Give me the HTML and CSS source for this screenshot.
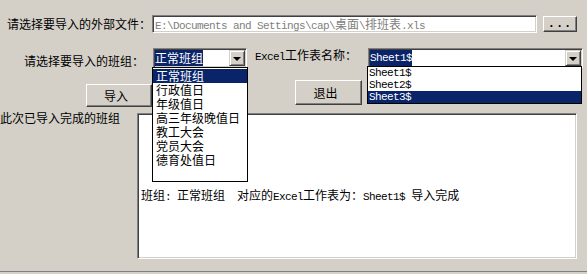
FILE: index.html
```html
<!DOCTYPE html>
<html lang="zh-CN">
<head>
  <meta charset="UTF-8" />
  <meta name="viewport" content="width=device-width, initial-scale=1" />
  <title>导入班组</title>
  <link rel="stylesheet" href="styles.css">
</head>
<body>
  <div class="import-dialog">
    <div class="row file-row">
      <label class="field-label file-label">请选择要导入的外部文件：</label>
      <div class="path-field"><span class="mono">E:\Documents and Settings\cap\</span>桌面<span class="mono">\</span>排班表<span class="mono">.xls</span></div>
      <button class="win-btn browse-btn">...</button>
    </div>

    <div class="row select-row">
      <label class="field-label group-label">请选择要导入的班组：</label>
      <div class="combo group-combo">
        <span class="combo-value">正常班组</span>
        <span class="combo-arrow"></span>
        <ul class="combo-list group-list">
          <li class="selected">正常班组</li>
          <li>行政值日</li>
          <li>年级值日</li>
          <li>高三年级晚值日</li>
          <li>教工大会</li>
          <li>党员大会</li>
          <li>德育处值日</li>
        </ul>
      </div>
      <label class="field-label sheet-label"><span class="mono">Excel</span>工作表名称：</label>
      <div class="combo sheet-combo">
        <span class="combo-value mono">Sheet1$</span>
        <span class="combo-arrow"></span>
        <ul class="combo-list sheet-list mono">
          <li>Sheet1$</li>
          <li>Sheet2$</li>
          <li class="selected">Sheet3$</li>
        </ul>
      </div>
    </div>

    <div class="row button-row">
      <button class="win-btn import-btn">导入</button>
      <button class="win-btn exit-btn">退出</button>
    </div>

    <div class="row log-row">
      <label class="field-label log-label">此次已导入完成的班组</label>
      <div class="log-box">
        <div class="log-line">班组<span class="mono">: </span>正常班组<span class="mono">  </span>对应的<span class="mono">Excel</span>工作表为：<span class="mono">Sheet1$ </span>导入完成</div>
      </div>
    </div>
  </div>
</body>
</html>
```

FILE: styles.css
```css
body {
  margin: 0;
  background: #d4d0c8; /* classic dialog grey */
  font-family: "Noto Sans CJK SC", sans-serif;
  font-size: 12px;
  line-height: 14px;
  color: #000;
}
.import-dialog {
  height: 271px;
  border-bottom: 1px solid #808080;
  overflow: hidden;
}
.mono {
  font-family: "Liberation Mono", monospace;
  font-size: 11px;
  letter-spacing: -0.6px;
}
.row {
  display: flex;
  align-items: flex-start;
}
.field-label {
  white-space: nowrap;
}

/* sunken / raised edges */
.path-field, .combo, .log-box {
  box-sizing: border-box;
  background: #fff;
  border: 1px solid;
  border-color: #808080 #fff #fff #808080;
  box-shadow: inset 1px 1px #404040, inset -1px -1px #d4d0c8;
  padding: 1px;
}
.win-btn {
  box-sizing: border-box;
  padding: 0;
  font-family: inherit;
  font-size: 12px;
  line-height: 14px;
  color: #000;
  background: #d4d0c8;
  border: 1px solid;
  border-color: #fff #404040 #404040 #fff;
  box-shadow: inset -1px -1px #808080;
}

/* row 1 */
.file-row {
  align-items: center;
  padding: 15px 0 0 7px;
}
.path-field {
  width: 385px;
  height: 18px;
  margin-left: 1px;
  padding: 1px 2px;
  color: #808080;
  white-space: pre;
  overflow: hidden;
}
.browse-btn {
  width: 34px;
  height: 16px;
  margin-left: 6px;
  font-family: "Liberation Mono", monospace;
  font-weight: bold;
  letter-spacing: 1px;
}

/* row 2 */
.select-row {
  margin-top: 15px;
  padding-left: 24px;
}
.group-label {
  margin-top: 6px;
}
.combo {
  position: relative;
  display: flex;
  height: 20px;
}
.group-combo {
  width: 94px;
  margin-left: 9px;
}
.sheet-label {
  margin-left: 8px;
}
.sheet-combo {
  width: 215px;
  margin-left: 11px;
}
.combo-value {
  height: 16px;
  line-height: 16px;
  background: #0a246a;
  color: #fff;
}
.combo-arrow {
  box-sizing: border-box;
  width: 16px;
  height: 16px;
  margin-left: auto;
  background: #d4d0c8;
  border: 1px solid;
  border-color: #d4d0c8 #404040 #404040 #d4d0c8;
  box-shadow: inset 1px 1px #fff, inset -1px -1px #808080;
  display: flex;
  align-items: center;
  justify-content: center;
}
.combo-arrow::after {
  content: "";
  border-left: 4px solid transparent;
  border-right: 4px solid transparent;
  border-top: 4px solid #000;
  margin-top: 1px;
}
.combo-list {
  position: absolute;
  z-index: 10;
  box-sizing: border-box;
  margin: 0;
  padding: 0;
  list-style: none;
  background: #fff;
  border: 1px solid #000;
}
.combo-list li {
  white-space: pre;
}
.combo-list .selected {
  background: #0a246a;
  color: #fff;
}
.group-list {
  top: 18px;
  left: -2px;
  width: 96px;
  height: 115px;
  padding-top: 1px;
}
.group-list li {
  height: 14px;
  padding-left: 3px;
}
.sheet-list {
  top: 17px;
  left: -2px;
  width: 215px;
  height: 38px;
}
.sheet-list li {
  height: 12px;
  line-height: 12px;
  padding-left: 1px;
}

/* row 3 */
.button-row {
  margin-top: 12px;
  padding-left: 86px;
}
.import-btn {
  width: 66px;
  height: 23px;
  margin-top: 4px;
  padding-right: 6px;
}
.exit-btn {
  width: 67px;
  height: 25px;
  margin-left: 143px;
  padding-right: 6px;
}

/* row 4 */
.log-row {
  margin-top: 4px;
}
.log-label {
  width: 120px;
}
.log-box {
  width: 440px;
  height: 146px;
  margin: 2px 0 0 17px;
  padding: 74px 0 0 3px;
}
.log-line {
  white-space: pre;
}
```
